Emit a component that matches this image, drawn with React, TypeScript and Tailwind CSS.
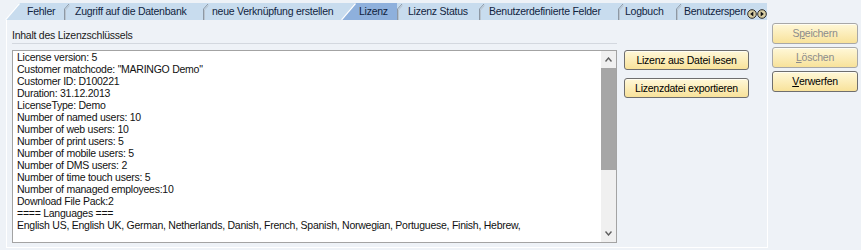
import React from 'react';

const tabs = [
  { label: 'Fehler', w: 'w-[59px]', pl: 'pl-[22px]', z: 'z-[9]' },
  { label: 'Zugriff auf die Datenbank', w: 'w-[153px]', pl: 'pl-[25px]', z: 'z-[8]' },
  { label: 'neue Verknüpfung erstellen', w: 'w-[166px]', pl: 'pl-[23px]', z: 'z-[7]' },
  { label: 'Lizenz', w: 'w-[56px]', pl: 'pl-[18px]', z: 'z-[20]', active: true },
  { label: 'Lizenz Status', w: 'w-[96px]', pl: 'pl-[25px]', z: 'z-[5]' },
  { label: 'Benutzerdefinierte Felder', w: 'w-[153px]', pl: 'pl-[24px]', z: 'z-[4]' },
  { label: 'Logbuch', w: 'w-[72px]', pl: 'pl-[21px]', z: 'z-[3]' },
  { label: 'Benutzersperren', w: 'w-[120px]', pl: 'pl-[22px]', z: 'z-[2]' },
];

const lines = [
  'License version: 5',
  'Customer matchcode: "MARINGO Demo"',
  'Customer ID: D100221',
  'Duration: 31.12.2013',
  'LicenseType: Demo',
  'Number of named users: 10',
  'Number of web users: 10',
  'Number of print users: 5',
  'Number of mobile users: 5',
  'Number of DMS users: 2',
  'Number of time touch users: 5',
  'Number of managed employees:10',
  'Download File Pack:2',
  '==== Languages ===',
  'English US, English UK, German, Netherlands, Danish, French, Spanish, Norwegian, Portuguese, Finish, Hebrew,',
];

function Tab({ tab, index }: { tab: (typeof tabs)[number]; index: number }) {
  return (
    <div className={`relative h-[17px] shrink-0 ${tab.w} ${tab.z} ${index > 0 ? '-ml-[14px]' : ''}`}>
      <div
        className={`absolute inset-0 [clip-path:polygon(0_100%,14px_0,100%_0,100%_100%)] ${
          tab.active ? 'bg-[#8eb0dc]' : 'bg-[#c8dcee]'
        }`}
      />
      {(index === 0 || tab.active) && (
        <svg className="absolute left-0 top-0" width="15" height="17">
          <line x1="0.5" y1="17" x2="14.5" y2="0.5" stroke="#ffffff" strokeWidth="1.2" />
        </svg>
      )}
      {index > 0 && !tab.active && (
        <svg className="absolute left-[14px] top-0" width="6" height="17">
          <polyline points="0.5,17 0.5,6 5,1" fill="none" stroke="#8d98a4" strokeWidth="1" />
          <polyline points="1.5,17 1.5,7 5.5,2.5" fill="none" stroke="#b9c4cf" strokeWidth="1" />
        </svg>
      )}
      <div className={`relative whitespace-nowrap leading-[17px] text-[#10243f] ${tab.pl}`}>{tab.label}</div>
    </div>
  );
}

function Chevron({ up }: { up?: boolean }) {
  return (
    <svg width="7" height="5" viewBox="0 0 7 5">
      <polyline
        points={up ? '0.5,4.5 3.5,1 6.5,4.5' : '0.5,0.5 3.5,4 6.5,0.5'}
        fill="none"
        stroke="#5f5f5f"
        strokeWidth="1.4"
      />
    </svg>
  );
}

function NavArrow({ left }: { left?: boolean }) {
  return (
    <svg width="10" height="10" viewBox="0 0 10 10">
      <circle cx="5" cy="5" r="4.3" fill="#d9cfa4" stroke="#2a2a2a" strokeWidth="1" />
      <polygon points={left ? '6.3,2.4 3.2,5 6.3,7.6' : '3.7,2.4 6.8,5 3.7,7.6'} fill="#111" />
    </svg>
  );
}

function YellowButton({
  children,
  className = '',
  disabled,
}: {
  children: React.ReactNode;
  className?: string;
  disabled?: boolean;
}) {
  return (
    <button
      className={`flex items-center justify-center rounded-[3px] border bg-linear-to-b from-[#fff8d8] to-[#f8e29a] shadow-[inset_0_1px_0_#fffdf2] leading-none ${
        disabled ? 'border-[#a8a8a8] text-[#8c8c8c]' : 'border-[#6e6e6e] text-black'
      } ${className}`}
    >
      {children}
    </button>
  );
}

export default function App() {
  return (
    <div className="flex h-[250px] w-[861px] overflow-hidden bg-[#eef2f7] text-[10.5px] tracking-[-0.25px] text-black [font-family:'Liberation_Sans',Arial,sans-serif]">
      <div className="flex w-[769px] shrink-0 flex-col">
        {/* tab strip */}
        <div className="relative flex h-[20px] items-end pl-[5px]">
          <div className="flex w-[762px] overflow-hidden">
            {tabs.map((t, i) => (
              <Tab key={t.label} tab={t} index={i} />
            ))}
          </div>
          <div className="absolute right-[2px] top-[9px] z-30 flex gap-0 bg-[#c8dcee] pl-[1px]">
            <NavArrow left />
            <NavArrow />
          </div>
        </div>

        {/* panel */}
        <div className="ml-[6px] flex h-[228px] w-[762px] border-x border-b border-white pl-[5px]">
          <div className="flex w-[605px] flex-col">
            <div className="h-[24px] border-b border-[#d3d8df] pt-[9px] leading-[13px] text-[#1a1a1a]">
              Inhalt des Lizenzschlüssels
            </div>
            <div className="mt-[6px] flex h-[193px] border border-[#a3a3a3] bg-white">
              <div className="flex-1 overflow-hidden whitespace-nowrap pl-[4px] leading-[12px] text-[#111]">
                {lines.map((l) => (
                  <div key={l}>{l}</div>
                ))}
              </div>
              <div className="flex w-[15px] flex-col bg-[#f0f0f0]">
                <div className="flex h-[17px] items-center justify-center">
                  <Chevron up />
                </div>
                <div className="h-[102px] bg-[#a6a6a6]" />
                <div className="flex-1" />
                <div className="flex h-[17px] items-center justify-center">
                  <Chevron />
                </div>
              </div>
            </div>
          </div>
          <div className="ml-[7px] flex flex-col gap-[8px] pt-[30px]">
            <YellowButton className="h-[20px] w-[125px]">Lizenz aus Datei lesen</YellowButton>
            <YellowButton className="h-[20px] w-[125px]">Lizenzdatei exportieren</YellowButton>
          </div>
        </div>
      </div>

      {/* right action buttons */}
      <div className="flex flex-col gap-[3px] pl-[3px] pt-[23px]">
        <YellowButton disabled className="h-[21px] w-[86px]">
          S<span className="underline">p</span>eichern
        </YellowButton>
        <YellowButton disabled className="h-[21px] w-[86px]">
          <span className="underline">L</span>öschen
        </YellowButton>
        <YellowButton className="h-[21px] w-[86px]">
          <span className="underline">V</span>erwerfen
        </YellowButton>
      </div>
    </div>
  );
}
